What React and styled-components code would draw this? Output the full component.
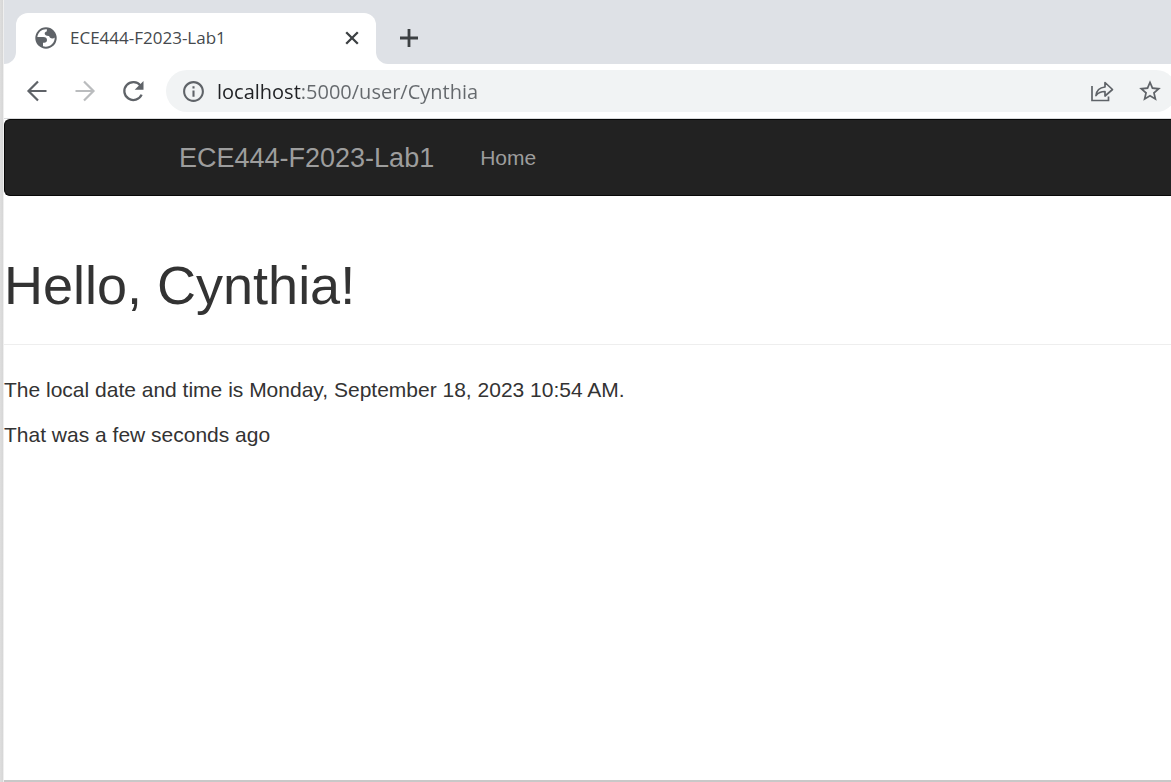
import React from "react";
import styled, { createGlobalStyle } from "styled-components";
import { MdInfoOutline, MdStarBorder } from "react-icons/md";

const GlobalStyle = createGlobalStyle`
  *, *::before, *::after { box-sizing: border-box; }
  body { margin: 0; background: #fff; }
`;

const Desktop = styled.div`
  min-height: 100vh;
  display: flex;
  padding-left: 4px;
  overflow: hidden;
  background: linear-gradient(to right, #dedede 0, #d6d6d6 3px, #efefef 3px, #efefef 4px);
`;

const BrowserWindow = styled.div`
  flex: 1;
  min-width: 0;
  display: flex;
  flex-direction: column;
  background: #fff;
  border-bottom: 2px solid #c8c8c8;
`;

const TabStrip = styled.div`
  display: flex;
  align-items: flex-end;
  height: 64px;
  background: #dee1e6;
`;

const TabEdge = styled.div`
  width: 12px;
  height: 12px;
  background: #fff;

  &::before {
    content: "";
    display: block;
    height: 12px;
    background: #dee1e6;
    border-radius: ${(p) => (p.$side === "left" ? "0 0 12px 0" : "0 0 0 12px")};
  }
`;

const Tab = styled.div`
  display: flex;
  align-items: center;
  width: 360px;
  height: 51px;
  padding: 0 12px 2px 18px;
  background: #fff;
  border-radius: 12px 12px 0 0;
  color: #45494d;
  font: 17px/24px "Open Sans", sans-serif;

  svg { flex: none; }
`;

const TabTitle = styled.span`
  flex: 1;
  margin-left: 12px;
  white-space: nowrap;
`;

const IconButton = styled.button`
  display: flex;
  align-items: center;
  justify-content: center;
  flex: none;
  width: ${(p) => p.$size || 48}px;
  height: ${(p) => p.$size || 48}px;
  padding: 0;
  border: 0;
  background: none;
  color: ${(p) => p.$color || "#5f6368"};
`;

const NewTab = styled.div`
  display: flex;
  align-items: center;
  height: 51px;
  margin-left: 3px;
  padding-bottom: 2px;
`;

const Toolbar = styled.div`
  display: flex;
  align-items: center;
  height: 55px;
  padding-left: 9px;
  border-bottom: 1px solid #d9dadc;
`;

const AddressBar = styled.div`
  flex: 1;
  display: flex;
  align-items: center;
  height: 42px;
  margin: 0 -6px 0 9px;
  padding: 0 3px;
  border-radius: 21px;
  background: #f1f3f4;
`;

const UrlInput = styled.input`
  flex: 1;
  min-width: 0;
  height: 42px;
  padding: 0;
  border: 0;
  outline: 0;
  color: #5f6368;
  font: 20px/28px "Open Sans", sans-serif;
  background: linear-gradient(to right, #202124 84px, #64686c 84px);
  background-clip: text;
  -webkit-text-fill-color: transparent;
`;

const Navbar = styled.nav`
  display: flex;
  align-items: center;
  height: 77px;
  padding-left: 174px;
  border: 1px solid #080808;
  border-right: 0;
  border-radius: 6px 0 0 6px;
  background: #222;
  font-family: "Liberation Sans", Arial, sans-serif;
`;

const NavLink = styled.a`
  color: #9d9d9d;
  font-size: ${(p) => (p.$brand ? 27 : 21)}px;
  line-height: 30px;
  margin-right: 46px;
  text-decoration: none;
`;

const Page = styled.main`
  color: #333;
  font: 21px/30px "Liberation Sans", Arial, sans-serif;

  p { margin: 0 0 15px; }
`;

const PageHeader = styled.header`
  margin: 59px 0 30px;
  padding-bottom: 29px;
  border-bottom: 1px solid #eee;

  h1 {
    margin: 0;
    font-size: 54px;
    line-height: 60px;
    font-weight: 400;
  }
`;

const GlobeIcon = () => (
  <svg width="24" height="24" viewBox="0 0 24 24" aria-hidden="true">
    <circle cx="12" cy="12" r="10.7" fill="#5f6368" />
    <path fill="#fff" d="M13 3.400C8.200 2.800 4.200 6 3.300 11h6c2.400 0 3.700 1.200 3.700 3s-1.200 2.800-2.900 2.800H9v3.500c6 1.800 11.800-2.600 11.700-8.800-.5.700-1.300 1-2.300 1-1.900 0-3-.9-3.300-2.500-2.700.1-4.400-.8-4.400-2.400 0-1.200.8-1.800 2-2z" />
  </svg>
);

const LineIcon = ({ size, width, d }) => (
  <svg width={size} height={size} viewBox="0 0 24 24" fill="none" stroke="currentColor" strokeWidth={width} aria-hidden="true">
    <path d={d} />
  </svg>
);

const ReloadIcon = () => (
  <svg width="24" height="24" viewBox="0 0 24 24" aria-hidden="true">
    <path d="M19.500 6.600A9 9 0 1 0 20.600 15.600" fill="none" stroke="currentColor" strokeWidth="2.300" />
    <path d="M22.500 2v8.800h-8.800z" fill="currentColor" />
  </svg>
);

const ShareIcon = () => (
  <svg width="24" height="24" viewBox="0 0 24 24" fill="none" stroke="#5f6368" strokeWidth="1.700" aria-hidden="true">
    <path d="M2 7v14.500h16.500v-4" />
    <path d="M6 16.500c.5-5 3.500-8 9-8.500V3.500l7.500 7-7.500 6.500v-4.500c-4 0-6.700 1-9 4z" strokeLinejoin="round" />
  </svg>
);

export default function App() {
  return (
    <>
      <GlobalStyle />
      <Desktop>
        <BrowserWindow>
          <TabStrip>
            <TabEdge $side="left" />
            <Tab>
              <GlobeIcon />
              <TabTitle>ECE444-F2023-Lab1</TabTitle>
              <IconButton $size={24} $color="#3c4043" aria-label="Close tab">
                <LineIcon size={24} width={2.3} d="M6.200 6.200l11.600 11.600M17.800 6.200L6.200 17.800" />
              </IconButton>
            </Tab>
            <TabEdge $side="right" />
            <NewTab>
              <IconButton $size={36} $color="#3c4043" aria-label="New tab">
                <LineIcon size={24} width={2.8} d="M12 3v18M3 12h18" />
              </IconButton>
            </NewTab>
          </TabStrip>
          <Toolbar>
            <IconButton aria-label="Back">
              <LineIcon size={24} width={2.2} d="M21.500 12H3.500M13 2.500L3.500 12l9.500 9.500" />
            </IconButton>
            <IconButton $color="#babcbe" aria-label="Forward">
              <LineIcon size={24} width={2.2} d="M2.500 12h18M11 2.500l9.500 9.500-9.500 9.500" />
            </IconButton>
            <IconButton aria-label="Reload"><ReloadIcon /></IconButton>
            <AddressBar>
              <IconButton aria-label="View site information"><MdInfoOutline size={25} /></IconButton>
              <UrlInput aria-label="Address" defaultValue="localhost:5000/user/Cynthia" />
              <IconButton aria-label="Share this page"><ShareIcon /></IconButton>
              <IconButton aria-label="Bookmark this tab"><MdStarBorder size={26} /></IconButton>
            </AddressBar>
          </Toolbar>
          <Navbar>
            <NavLink $brand href="#">ECE444-F2023-Lab1</NavLink>
            <NavLink href="#">Home</NavLink>
          </Navbar>
          <Page>
            <PageHeader><h1>Hello, Cynthia!</h1></PageHeader>
            <p>The local date and time is Monday, September 18, 2023 10:54 AM.</p>
            <p>That was a few seconds ago</p>
          </Page>
        </BrowserWindow>
      </Desktop>
    </>
  );
}
